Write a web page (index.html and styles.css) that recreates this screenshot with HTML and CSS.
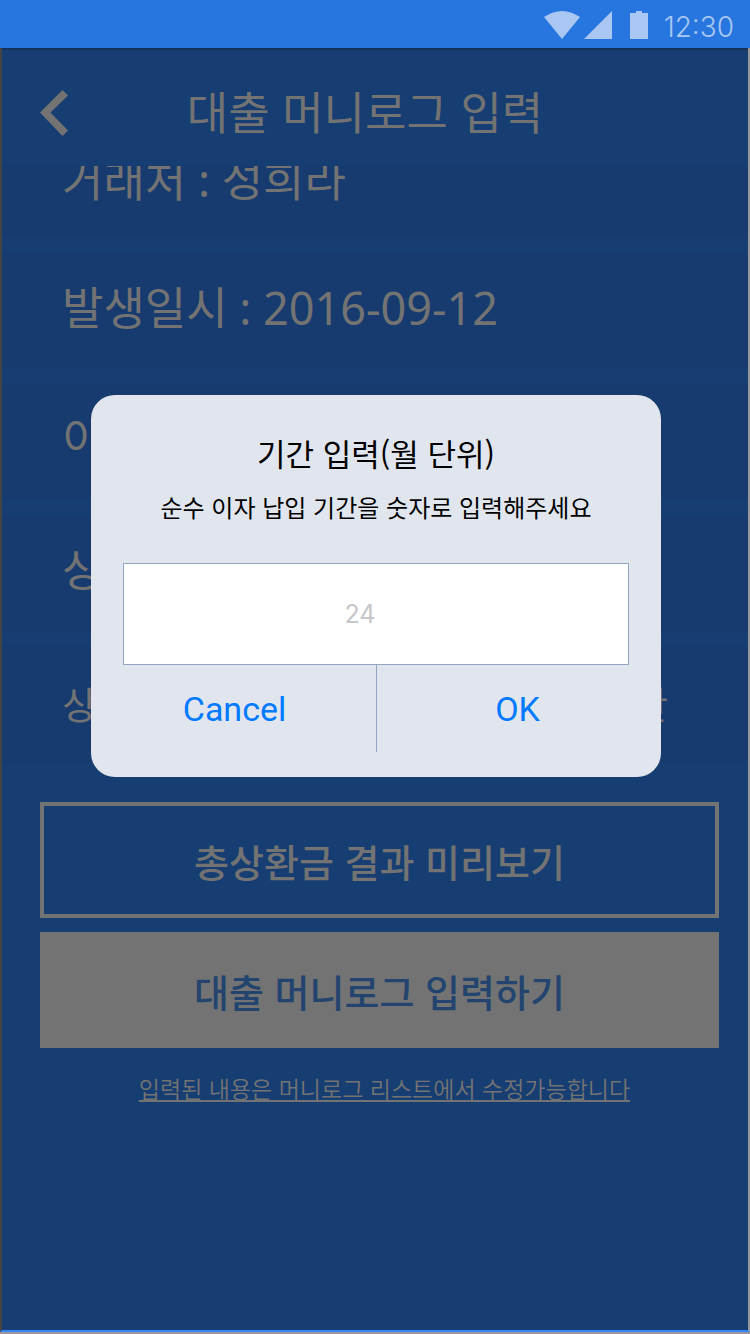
FILE: index.html
```html
<!DOCTYPE html>
<html lang="ko">
<head>
<meta charset="utf-8">
<meta name="viewport" content="width=device-width, initial-scale=1">
<title>대출 머니로그 입력</title>
<link rel="stylesheet" href="styles.css">
</head>
<body>
<div class="screen">
  <div class="status">
    <svg class="status-icons" width="104" height="28" viewBox="0 0 104 28" aria-hidden="true">
      <path d="M0 6Q18-6 36 6L18 28ZM68 0V28H40ZM86 2H92V0H98V2H104V28H86Z"/>
    </svg>
    <span class="clock">12:30</span>
  </div>
  <main class="app">
    <header class="header">
      <button class="back" type="button" aria-label="뒤로">
        <svg width="28" height="46" viewBox="0 0 28 46" aria-hidden="true"><path d="M22.500 0L28 5.500L10.500 22.500L28 40.500L22.500 46L0 22.500Z"/></svg>
      </button>
      <h1 class="title">대출 머니로그 입력</h1>
    </header>
    <ul class="rows">
      <li class="row row-cut">거래처 : 성희라</li>
      <li class="row">발생일시 : 2016-09-12</li>
      <li class="row">이</li>
      <li class="row">상</li>
      <li class="row row-split"><span>상</span><span>안</span></li>
    </ul>
    <div class="actions">
      <button class="action outline" type="button">총상환금 결과 미리보기</button>
      <button class="action solid" type="button">대출 머니로그 입력하기</button>
      <a class="note" href="#">입력된 내용은 머니로그 리스트에서 수정가능합니다</a>
    </div>
  </main>
  <form class="dialog" role="dialog" aria-labelledby="dialog-title">
    <h2 class="dialog-title" id="dialog-title">기간 입력(월 단위)</h2>
    <label class="dialog-text" for="months">순수 이자 납입 기간을 숫자로 입력해주세요</label>
    <input class="months" id="months" type="text" inputmode="numeric" placeholder="24">
    <div class="choices">
      <button class="choice" type="button">Cancel</button>
      <button class="choice" type="button">OK</button>
    </div>
  </form>
</div>
</body>
</html>
```
FILE: styles.css
```css
* { box-sizing: border-box; }
body {
  margin: 0;
  font-family: "Noto Sans CJK KR", sans-serif;
  font-weight: 400;
  background: #999;
}
button { font: inherit; border: 0; padding: 0; background: none; cursor: pointer; }
.screen {
  position: relative;
  display: flex;
  flex-direction: column;
  min-height: 100vh;
}
.status {
  display: flex;
  justify-content: flex-end;
  align-items: center;
  gap: 16px;
  height: 48px;
  padding: 2px 16px 0 0;
  background: #2775de;
  color: #a9c7f2;
}
.status-icons { fill: currentColor; }
.clock { padding-top: 4px; font: 300 28px/32px Inter, sans-serif; }
.app {
  flex: 1;
  margin-bottom: 2px;
  border-left: 2px solid #444;
  border-right: 2px solid #999;
  border-bottom: 2px solid #3587f7;
  background: #173e72;
  box-shadow: inset 0 2px #14315c;
  color: #737373;
}
.header {
  display: flex;
  align-items: center;
  height: 118px;
  padding: 12px 38px 0;
}
.back { display: flex; width: 28px; }
.back svg { fill: #737373; }
.title {
  flex: 1;
  margin: 0 48px 0 0;
  padding-bottom: 4px;
  text-align: center;
  font-size: 45px;
  line-height: 64px;
  font-weight: 400;
}
.rows {
  display: flex;
  flex-direction: column;
  gap: 15px;
  margin: 0;
  padding: 0;
  list-style: none;
}
.row {
  display: flex;
  align-items: center;
  height: 116px;
  padding: 0 80px 6px 60px;
  background: #173b6f;
  font-family: "Noto Sans", "Noto Sans CJK KR", sans-serif;
  font-size: 45px;
  line-height: 64px;
}
.row-cut {
  height: 72px;
  align-items: flex-end;
  padding-bottom: 26px;
  overflow: hidden;
}
.row-split { justify-content: space-between; padding-bottom: 0; font-size: 38px; }
.actions {
  display: flex;
  flex-direction: column;
  gap: 14px;
  padding: 40px 29px 0 38px;
}
.action {
  height: 116px;
  font-size: 38px;
  font-weight: 500;
}
.outline { border: 4px solid #737373; color: #737373; }
.solid { background: #737373; color: #23446e; }
.note {
  margin: 8px 0 0 10px;
  text-align: center;
  color: #737373;
  font-size: 23px;
  line-height: 36px;
  font-weight: 350;
}
.dialog {
  position: absolute;
  top: 395px;
  left: 91px;
  right: 89px;
  display: flex;
  flex-direction: column;
  padding: 34px 32px 25px;
  border-radius: 24px;
  background: #e1e6ee;
  color: #000;
  text-align: center;
}
.dialog-title { margin: 0; font-size: 31px; line-height: 48px; font-weight: 400; }
.dialog-text { margin: 12px 0 38px; font-size: 24px; line-height: 36px; }
.months {
  height: 102px;
  padding: 0 32px 0 0;
  border: 1px solid #92a6c3;
  border-radius: 0;
  background: #fff;
  text-align: center;
  font: 400 25px Inter, sans-serif;
}
.months::placeholder { color: #c5c5ca; opacity: 1; }
.choices { display: flex; height: 87px; }
.choice {
  flex: 1;
  padding-right: 30px;
  color: #007aff;
  font: 400 34px Roboto, sans-serif;
}
.choice + .choice {
  padding: 0 0 0 29px;
  border-left: 1px solid #92a6c3;
}
```
